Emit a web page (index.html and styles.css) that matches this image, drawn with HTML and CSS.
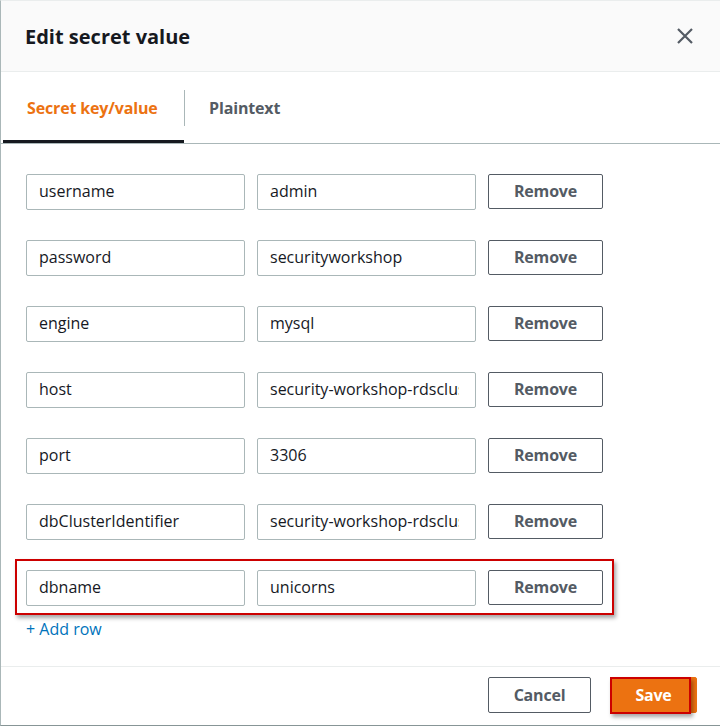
FILE: index.html
```html
<!DOCTYPE html>
<html>
<head>
<meta charset="utf-8">
<link rel="stylesheet" href="styles.css">
</head>
<body>
<div class="modal">
  <div class="header">
    <h2 class="title">Edit secret value</h2>
    <button class="close" aria-label="Close">
      <svg width="16" height="16" viewBox="0 0 16 16"><path d="M1 1 L15 15 M15 1 L1 15" stroke="#545b64" stroke-width="2.2" fill="none"/></svg>
    </button>
  </div>
  <div class="tabs">
    <div class="tab active">Secret key/value</div>
    <div class="tab-sep"></div>
    <div class="tab">Plaintext</div>
  </div>
  <div class="body">
    <div class="rows">
      <div class="row"><input class="field" value="username"><input class="field" value="admin"><button class="btn">Remove</button></div>
      <div class="row"><input class="field" value="password"><input class="field" value="securityworkshop"><button class="btn">Remove</button></div>
      <div class="row"><input class="field" value="engine"><input class="field" value="mysql"><button class="btn">Remove</button></div>
      <div class="row"><input class="field" value="host"><input class="field" value="security-workshop-rdscluster.cluster-cxyz.us-east-1.rds.amazonaws.com"><button class="btn">Remove</button></div>
      <div class="row"><input class="field" value="port"><input class="field" value="3306"><button class="btn">Remove</button></div>
      <div class="row"><input class="field" value="dbClusterIdentifier"><input class="field" value="security-workshop-rdscluster"><button class="btn">Remove</button></div>
      <div class="row marked"><input class="field" value="dbname"><input class="field" value="unicorns"><button class="btn">Remove</button><span class="highlight"></span></div>
    </div>
    <a class="add-row" href="#">+ Add row</a>
  </div>
  <div class="footer">
    <button class="btn">Cancel</button>
    <button class="btn primary">Save<span class="highlight"></span></button>
  </div>
</div>
</body>
</html>
```

FILE: styles.css
```css
* { box-sizing: border-box; }
html, body { margin: 0; padding: 0; background: #fff; }
body { font-family: "Open Sans", "Noto Sans", sans-serif; color: #16191f; }

.modal {
  width: 720px;
  height: 726px;
  border-left: 1px solid #aab7b8;
  border-top: 1px solid #eaeded;
  border-bottom: 1px solid #879596;
  display: flex;
  flex-direction: column;
}

.header {
  height: 71px;
  background: #fafafa;
  border-bottom: 1px solid #eaeded;
  display: flex;
  align-items: center;
  justify-content: space-between;
  padding: 0 27px 0 24px;
}
.title {
  margin: 0;
  font-size: 20px;
  font-weight: 700;
  color: #16191f;
}
.close {
  border: 0;
  background: none;
  padding: 0;
  width: 16px;
  height: 16px;
  display: block;
}
.close svg { display: block; }

.tabs {
  height: 72px;
  border-bottom: 1px solid #aab7b8;
  display: flex;
  align-items: center;
  padding-left: 2px;
}
.tab {
  font-size: 16px;
  font-weight: 700;
  color: #545b64;
  height: 100%;
  display: flex;
  align-items: center;
  padding: 0 24px;
  letter-spacing: -0.15px;
}
.tab.active {
  color: #ec7211;
  border-bottom: 3px solid #16191f;
  padding-top: 3px;
  width: 181px;
}
.tab-sep {
  width: 1px;
  height: 36px;
  background: #aab7b8;
}

.body {
  flex: 1;
  padding: 30px 25px 0;
  display: flex;
  flex-direction: column;
}
.rows {
  display: flex;
  flex-direction: column;
  gap: 30px;
}
.row {
  display: flex;
  gap: 12px;
  width: max-content;
  position: relative;
}
.field {
  width: 219px;
  height: 36px;
  border: 1px solid #aab7b8;
  border-radius: 2px;
  padding: 0 16px 2px 12px;
  font-family: inherit;
  font-size: 16px;
  color: #16191f;
  background: #fff;
  outline: none;
}
.btn {
  height: 36px;
  min-width: 103px;
  padding: 0 20px;
  border: 1px solid #545b64;
  border-radius: 2px;
  background: #fff;
  color: #545b64;
  font-family: inherit;
  font-size: 16px;
  font-weight: 700;
  letter-spacing: -0.2px;
  position: relative;
}
.row .btn { width: 115px; height: 35px; padding-bottom: 2px; }

.highlight {
  position: absolute;
  border: 2px solid #cc0000;
  box-shadow: 2px 3px 4px rgba(0,0,0,0.35);
  pointer-events: none;
}
.marked .highlight { left: -11px; top: -11px; right: -11px; bottom: -9px; }

.add-row {
  margin-top: 12px;
  color: #0073bb;
  text-decoration: none;
  font-size: 16px;
  width: max-content;
}

.footer {
  height: 59px;
  border-top: 1px solid #eaeded;
  display: flex;
  justify-content: flex-end;
  align-items: flex-start;
  padding: 10px 23px 0 0;
  gap: 19px;
}
.footer .btn { height: 36px; }
.btn.primary {
  background: #ec7211;
  border-color: #ec7211;
  color: #fff;
  width: 87px;
  min-width: 0;
  padding: 0;
}
.btn.primary .highlight { left: -1px; top: -1px; width: 81px; height: 37px; }
```
